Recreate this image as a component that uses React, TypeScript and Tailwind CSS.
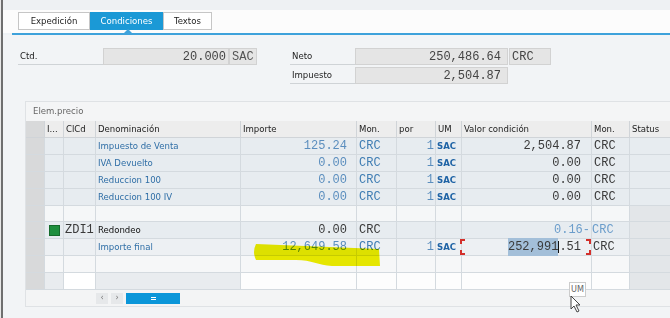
import React from "react";

const WC = [
  "w-[19px]",
  "w-[19px]",
  "w-[32px]",
  "w-[145px]",
  "w-[116px]",
  "w-[40px]",
  "w-[39px]",
  "w-[26px]",
  "w-[130px]",
  "w-[38px]",
  "w-[60px]",
];

const MONO = "font-['Liberation_Mono',monospace] text-[12px]";
const LINK = "text-[#2f6ea6]";
const NUM = "text-[#5b8ebe]";
const DARK = "text-[#3a3a3a]";
const SEL = "bg-[#d8d9da] border-[#c8cbce]";

type C = { c?: React.ReactNode; cls?: string };

function Row({ cells, bg }: { cells: C[]; bg: string }) {
  return (
    <div className={`flex h-[17px] ${bg}`}>
      {cells.map((cell, i) => (
        <div
          key={i}
          className={`${WC[i]} shrink-0 border-r border-b border-[#d4dadf] flex items-center overflow-hidden whitespace-nowrap relative ${cell.cls ?? ""}`}
        >
          {cell.c}
        </div>
      ))}
    </div>
  );
}

function dataRow(den: string, imp: string, val: string): C[] {
  return [
    { cls: SEL },
    {},
    {},
    { c: den, cls: `pl-[2px] ${LINK}` },
    { c: imp, cls: `justify-end pr-[9px] ${MONO} ${NUM}` },
    { c: "CRC", cls: `pl-[2px] ${MONO} text-[#3f7db3]` },
    { c: "1", cls: `justify-end pr-[1px] ${MONO} ${NUM}` },
    { c: "SAC", cls: `pl-[1px] font-bold text-[#1f63a5]` },
    { c: val, cls: `justify-end pr-[10px] ${MONO} ${DARK}` },
    { c: "CRC", cls: `pl-[2px] ${MONO} ${DARK}` },
    {},
  ];
}

function emptyRow(): C[] {
  return [{ cls: SEL }, {}, {}, {}, {}, {}, {}, {}, {}, {}, { cls: "bg-[#e3e6e9]" }];
}

function Corner({ pos }: { pos: string }) {
  return <span className={`absolute w-[5px] h-[5px] border-[#d3302b] ${pos}`} />;
}

export default function App() {
  const rows: { bg: string; cells: C[] }[] = [
    { bg: "bg-[#e7ecf0]", cells: dataRow("Impuesto de Venta", "125.24", "2,504.87") },
    { bg: "bg-[#e7ecf0]", cells: dataRow("IVA Devuelto", "0.00", "0.00") },
    { bg: "bg-[#e7ecf0]", cells: dataRow("Reduccion 100", "0.00", "0.00") },
    { bg: "bg-[#e7ecf0]", cells: dataRow("Reduccion 100 IV", "0.00", "0.00") },
    { bg: "bg-[#f5f7f8]", cells: emptyRow() },
    {
      bg: "bg-[#e7ecf0]",
      cells: [
        { cls: SEL },
        {
          cls: "justify-center",
          c: <span className="w-[11px] h-[11px] bg-[#1e8f3e] border border-[#156b2c]" />,
        },
        { c: "ZDI1", cls: `pl-[1px] ${MONO} ${DARK}` },
        { c: "Redondeo", cls: "pl-[2px] text-[#111]" },
        { c: "0.00", cls: `justify-end pr-[9px] ${MONO} ${DARK}` },
        { c: "CRC", cls: `pl-[2px] ${MONO} ${DARK}` },
        {},
        {},
        { c: "0.16-", cls: `justify-end pr-[1px] ${MONO} text-[#6b9dcb]` },
        { c: "CRC", cls: `pl-[0px] ${MONO} text-[#6b9dcb]` },
        { cls: "bg-[#e3e6e9]" },
      ],
    },
    {
      bg: "bg-[#edf0f3]",
      cells: [
        { cls: SEL },
        {},
        {},
        { c: "Importe final", cls: `pl-[2px] ${LINK}` },
        { c: "12,649.58", cls: `justify-end pr-[9px] ${MONO} ${NUM}` },
        { c: "CRC", cls: `pl-[2px] ${MONO} text-[#3f7db3]` },
        { c: "1", cls: `justify-end pr-[1px] ${MONO} ${NUM}` },
        { c: "SAC", cls: "pl-[1px] font-bold text-[#1f63a5]" },
        {
          cls: `justify-end pr-[10px] ${MONO} ${DARK} overflow-visible`,
          c: (
            <>
              <Corner pos="left-[-2px] top-0 border-l-2 border-t-2" />
              <Corner pos="left-[-2px] bottom-0 border-l-2 border-b-2" />
              <Corner pos="right-0 top-0 border-r-2 border-t-2" />
              <Corner pos="right-0 bottom-0 border-r-2 border-b-2" />
              <span className="bg-[#a3bfd9]">252,991</span>
              <span className="w-[1px] h-[12px] bg-[#111]" />
              <span>.51</span>
            </>
          ),
        },
        { c: "CRC", cls: `pl-[1px] ${MONO} ${DARK}` },
        { cls: "bg-[#e3e6e9]" },
      ],
    },
    { bg: "bg-[#f6f7f8]", cells: emptyRow() },
    {
      bg: "bg-[#fdfdfd]",
      cells: [
        { cls: SEL },
        { cls: "bg-[#e9ecef]" },
        { cls: "bg-white" },
        { cls: "bg-[#e9ecef]" },
        {},
        {},
        {},
        {},
        {},
        {},
        { cls: "bg-[#e3e6e9]" },
      ],
    },
  ];

  const headers = ["", "I...", "ClCd", "Denominación", "Importe", "Mon.", "por", "UM", "Valor condición", "Mon.", "Status"];

  return (
    <div className="w-[670px] h-[318px] overflow-hidden relative flex bg-[#eef2f5] font-['DejaVu_Sans_Condensed','Liberation_Sans',sans-serif] text-[9.5px] text-[#333]">
      <div className="w-[1px] bg-[#e8e8e8]" />
      <div className="w-[2px] bg-[#6f6f6f]" />
      <div className="flex-1 flex flex-col min-w-0">
        <div className="h-[10px] bg-[#eef1f3]" />
        <div className="h-[23px] bg-[#fcfcfc] pl-[15px] pt-[2px] flex items-start">
          <div className="flex h-[18px] text-[9.5px]">
            <div className="w-[72px] border border-[#c6c6c6] bg-white flex items-center justify-center text-[#222]">
              Expedición
            </div>
            <div className="w-[73px] bg-[#1b99d6] flex items-center justify-center text-white">Condiciones</div>
            <div className="w-[49px] border border-[#c6c6c6] bg-white flex items-center justify-center text-[#222]">
              Textos
            </div>
          </div>
        </div>
        <div className="ml-[9px] h-[2px] bg-[#3ea2db] relative">
          <svg className="absolute left-[111px] top-[-4px]" width="10" height="5" viewBox="0 0 10 5">
            <path d="M0,5 L5,0 L10,5 Z" fill="#3ea2db" />
          </svg>
        </div>
        <div className="flex-1 flex flex-col bg-[#f2f4f6]">
          <div className="mt-[13px] ml-[15px] flex h-[17px]">
            <div className="w-[85px] border-b border-[#cfd3d6] flex items-center pl-[2px] text-[#222]">Ctd.</div>
            <div className={`w-[126px] bg-[#e5e5e5] border border-[#d2d2d2] flex items-center justify-end pr-[2px] ${MONO} text-[#444]`}>
              20.000
            </div>
            <div className={`w-[28px] bg-[#e5e5e5] border border-[#d2d2d2] flex items-center pl-[2px] ${MONO} text-[#555]`}>
              SAC
            </div>
            <div className="w-[33px]" />
            <div className="w-[65px] border-b border-[#cfd3d6] flex items-center pl-[2px] text-[#222]">Neto</div>
            <div className={`w-[153px] bg-[#e5e5e5] border border-[#d2d2d2] flex items-center justify-end pr-[6px] ${MONO} text-[#444]`}>
              250,486.64
            </div>
            <div className={`ml-[1px] w-[42px] bg-[#e5e5e5] border border-[#d2d2d2] flex items-center pl-[2px] ${MONO} text-[#444]`}>
              CRC
            </div>
          </div>
          <div className="mt-[2px] ml-[15px] flex h-[17px]">
            <div className="w-[272px]" />
            <div className="w-[65px] border-b border-[#cfd3d6] flex items-center pl-[2px] text-[#222]">Impuesto</div>
            <div className={`w-[153px] bg-[#e5e5e5] border border-[#d2d2d2] flex items-center justify-end pr-[6px] ${MONO} text-[#444]`}>
              2,504.87
            </div>
          </div>
          <div className="mt-[17px] ml-[22px] h-[206px] w-[700px] bg-[#f4f5f6] border border-[#dfe2e5] flex flex-col">
            <div className="h-[19px] flex items-center pl-[7px] text-[#666]">Elem.precio</div>
            <div className="flex h-[17px] bg-[#ededed]">
              {headers.map((h, i) => (
                <div
                  key={i}
                  className={`${WC[i]} shrink-0 border-r border-b border-[#d0d4d8] flex items-center pl-[2px] text-[#222] whitespace-nowrap overflow-hidden ${i === 0 ? SEL : ""}`}
                >
                  {h}
                </div>
              ))}
            </div>
            {rows.map((r, i) => (
              <Row key={i} bg={r.bg} cells={r.cells} />
            ))}
            <div className="h-[16px] flex items-center pl-[70px] gap-[3px] bg-[#f3f4f5]">
              <div className="w-[12px] h-[11px] bg-[#e6e8ea] flex items-center justify-center text-[#777] text-[9px]">‹</div>
              <div className="w-[12px] h-[11px] bg-[#e6e8ea] flex items-center justify-center text-[#777] text-[9px]">›</div>
              <div className="w-[54px] h-[11px] bg-[#0b96d9] flex items-center justify-center">
                <span className="w-[5px] h-[3px] border-t border-b border-white" />
              </div>
            </div>
          </div>
        </div>
      </div>

      <svg className="absolute left-0 top-0 pointer-events-none mix-blend-multiply" width="670" height="318" viewBox="0 0 670 318">
        <path d="M256,244 L379,249 L380,266 L332,266 C318,265 312,260 296,260 L256,260 Q252,252 256,244 Z" fill="#eeee00" />
      </svg>

      <div className="absolute left-[569px] top-[282px] w-[17px] h-[15px] bg-white border border-[#cccccc] flex items-center justify-center text-[9px] text-[#666]">
        UM
      </div>
      <svg className="absolute left-[570px] top-[295px]" width="14" height="18" viewBox="0 0 14 18">
        <path d="M1,1 L1,14 L4,11 L7,17 L9,16 L6,10 L10,10 Z" fill="#ffffff" stroke="#444" strokeWidth="1" strokeLinejoin="round" />
      </svg>
    </div>
  );
}
